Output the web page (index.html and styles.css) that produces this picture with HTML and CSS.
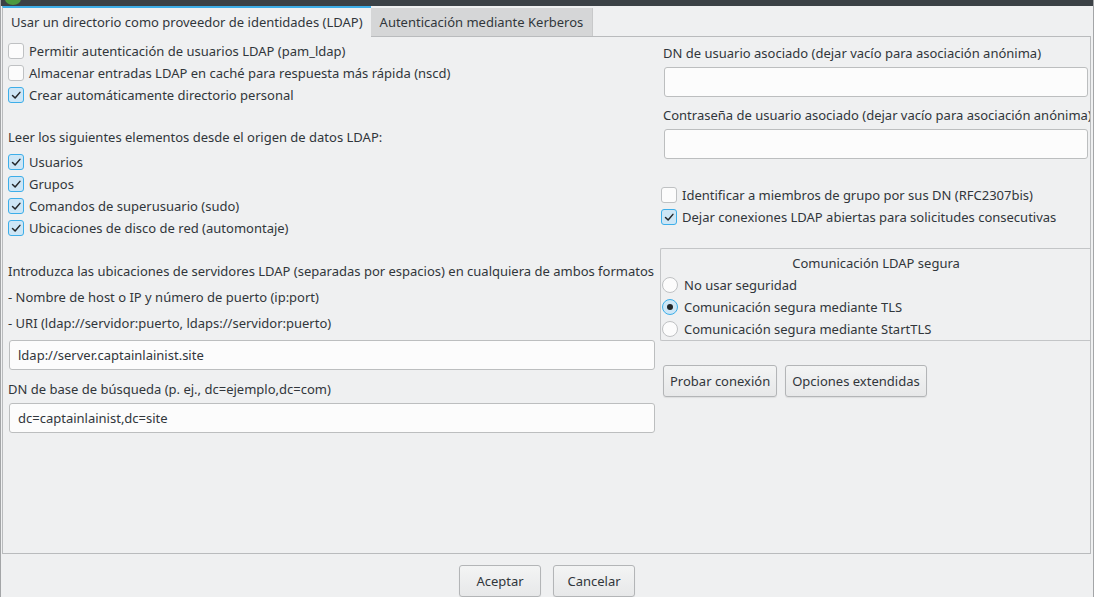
FILE: index.html
```html
<!DOCTYPE html>
<html lang="es">
<head>
<meta charset="utf-8">
<title>LDAP</title>
<link rel="stylesheet" href="styles.css">
</head>
<body>
<div class="window">
  <div class="titlebar"><span class="app-icon"></span></div>
  <div class="tabs">
    <div class="tab active">Usar un directorio como proveedor de identidades (LDAP)</div>
    <div class="tab">Autenticación mediante Kerberos</div>
  </div>
  <div class="panel">
    <div class="col col-left">
      <label class="check"><span class="box"></span>Permitir autenticación de usuarios LDAP (pam_ldap)</label>
      <label class="check"><span class="box"></span>Almacenar entradas LDAP en caché para respuesta más rápida (nscd)</label>
      <label class="check"><span class="box on"><svg viewBox="0 0 16 16"><polyline points="4,8.5 7,11.5 12.5,5" /></svg></span>Crear automáticamente directorio personal</label>

      <div class="text gap-20">Leer los siguientes elementos desde el origen de datos LDAP:</div>
      <div class="gap-3">
        <label class="check"><span class="box on"><svg viewBox="0 0 16 16"><polyline points="4,8.5 7,11.5 12.5,5" /></svg></span>Usuarios</label>
        <label class="check"><span class="box on"><svg viewBox="0 0 16 16"><polyline points="4,8.5 7,11.5 12.5,5" /></svg></span>Grupos</label>
        <label class="check"><span class="box on"><svg viewBox="0 0 16 16"><polyline points="4,8.5 7,11.5 12.5,5" /></svg></span>Comandos de superusuario (sudo)</label>
        <label class="check"><span class="box on"><svg viewBox="0 0 16 16"><polyline points="4,8.5 7,11.5 12.5,5" /></svg></span>Ubicaciones de disco de red (automontaje)</label>
      </div>

      <div class="text gap-21 nowrap">Introduzca las ubicaciones de servidores LDAP (separadas por espacios) en cualquiera de ambos formatos</div>
      <div class="text gap-4">- Nombre de host o IP y número de puerto (ip:port)</div>
      <div class="text gap-4">- URI (ldap://servidor:puerto, ldaps://servidor:puerto)</div>
      <div class="field gap-6">ldap://server.captainlainist.site</div>
      <div class="text gap-8">DN de base de búsqueda (p. ej., dc=ejemplo,dc=com)</div>
      <div class="field gap-3">dc=captainlainist,dc=site</div>
    </div>

    <div class="col col-right">
      <div class="text indent nowrap">DN de usuario asociado (dejar vacío para asociación anónima)</div>
      <div class="field wide gap-3"></div>
      <div class="text indent nowrap gap-7">Contraseña de usuario asociado (dejar vacío para asociación anónima)</div>
      <div class="field wide gap-3"></div>

      <div class="gap-25">
        <label class="check tight"><span class="box"></span>Identificar a miembros de grupo por sus DN (RFC2307bis)</label>
        <label class="check tight"><span class="box on"><svg viewBox="0 0 16 16"><polyline points="4,8.5 7,11.5 12.5,5" /></svg></span>Dejar conexiones LDAP abiertas para solicitudes consecutivas</label>
      </div>

      <div class="groupbox gap-20">
        <div class="group-title">Comunicación LDAP segura</div>
        <label class="radio"><span class="dot"></span>No usar seguridad</label>
        <label class="radio"><span class="dot on"></span>Comunicación segura mediante TLS</label>
        <label class="radio"><span class="dot"></span>Comunicación segura mediante StartTLS</label>
      </div>

      <div class="actions">
        <button class="btn">Probar conexión</button>
        <button class="btn">Opciones extendidas</button>
      </div>
    </div>
  </div>
  <div class="footer">
    <button class="btn dialog-btn">Aceptar</button>
    <button class="btn dialog-btn">Cancelar</button>
  </div>
</div>
</body>
</html>
```
FILE: styles.css
```css
* { box-sizing: border-box; }
html, body {
  margin: 0;
  padding: 0;
  width: 1094px;
  height: 597px;
  overflow: hidden;
  background: #eff0f1;
}
body {
  font-family: "Noto Sans", "DejaVu Sans", sans-serif;
  font-size: 13px;
  color: #31363b;
}
.window {
  width: 1094px;
  height: 597px;
  display: flex;
  flex-direction: column;
  border-left: 1px solid #a3a5a7;
  border-right: 1px solid #a3a5a7;
  background: #eff0f1;
}
.titlebar {
  height: 6px;
  background: #3b4146;
  flex: none;
  overflow: hidden;
  padding-left: 4px;
}
.app-icon {
  display: block;
  width: 16px;
  height: 12px;
  margin-top: -7px;
  border-radius: 50%;
  background: #4c9a3f;
}
.tabs {
  height: 30px;
  flex: none;
  display: flex;
  align-items: flex-end;
  padding-left: 1px;
  background: #eff0f1;
}
.tab {
  height: 28px;
  padding: 0 9px 0 9px;
  display: flex;
  align-items: center;
  background: #d5d6d7;
  white-space: nowrap;
  border-right: 1px solid #c8c9ca;
}
.tab.active {
  height: 31px;
  margin-bottom: -1px;
  position: relative;
  z-index: 1;
  background: #eff0f1;
  border-top: 2px solid #3daee9;
  border-left: 1px solid #b9bbbd;
  border-right: none;
  padding: 0 8px 1px 8px;
}
.panel {
  flex: none;
  height: 518px;
  margin: 0 2px 0 1px;
  border: 1px solid #b9bbbd;
  background: #eff0f1;
  display: flex;
  gap: 5px;
  padding-left: 5px;
}
.col { display: flex; flex-direction: column; }
.col-left { width: 647px; padding-top: 3px; }
.col-right { flex: 1; min-width: 0; padding-top: 5px; overflow: hidden; }

.text { height: 22px; line-height: 22px; white-space: nowrap; }
.nowrap { white-space: nowrap; }
.indent { padding-left: 3px; }

.gap-3 { margin-top: 3px; }
.gap-4 { margin-top: 4px; }
.gap-6 { margin-top: 6px; }
.gap-7 { margin-top: 7px; }
.gap-8 { margin-top: 8px; }
.gap-20 { margin-top: 20px; }
.gap-21 { margin-top: 21px; }
.gap-25 { margin-top: 25px; }

.check {
  height: 22px;
  display: flex;
  align-items: center;
  gap: 5px;
  white-space: nowrap;
}
.check.tight { padding-left: 1px; }
.box {
  width: 16px;
  height: 16px;
  flex: none;
  border: 1px solid #bfc1c3;
  border-radius: 3px;
  background: #fcfcfc;
  display: flex;
}
.box.on {
  border-color: #3daee9;
  background: #cde6f6;
}
.box svg { width: 14px; height: 14px; }
.box polyline {
  fill: none;
  stroke: #232629;
  stroke-width: 1.7;
  stroke-linecap: round;
  stroke-linejoin: round;
}

.field {
  height: 30px;
  margin-left: 1px;
  border: 1px solid #bcbebf;
  border-radius: 3px;
  background: #fcfcfc;
  padding: 0 8px;
  display: flex;
  align-items: center;
}
.field.wide { margin-left: 4px; margin-right: 2px; }

.groupbox {
  border: 1px solid #c3c5c7;
  border-right: none;
  border-radius: 2px 0 0 2px;
  padding: 3px 0 0 1px;
  display: flex;
  flex-direction: column;
}
.group-title {
  height: 22px;
  line-height: 22px;
  text-align: center;
}
.radio {
  height: 22px;
  display: flex;
  align-items: center;
  gap: 6px;
  white-space: nowrap;
}
.dot {
  width: 16px;
  height: 16px;
  flex: none;
  border: 1px solid #bfc1c3;
  border-radius: 50%;
  background: #fcfcfc;
  display: flex;
  align-items: center;
  justify-content: center;
}
.dot.on {
  border-color: #3daee9;
  background: #cde6f6;
}
.dot.on::after {
  content: "";
  width: 6px;
  height: 6px;
  border-radius: 50%;
  background: #232629;
}

.actions {
  display: flex;
  gap: 8px;
  margin-top: 24px;
  padding-left: 3px;
}
.btn {
  height: 32px;
  padding: 0 6px;
  font-family: inherit;
  font-size: 13px;
  color: #31363b;
  border: 1px solid #b3b5b7;
  border-radius: 3px;
  background: linear-gradient(#f3f4f4, #e7e8e9);
  box-shadow: 0 1px 1px rgba(0,0,0,0.08);
  white-space: nowrap;
}
.footer {
  flex: 1;
  display: flex;
  justify-content: center;
  gap: 12px;
  padding-top: 11px;
}
.dialog-btn { width: 82px; padding: 0; }
```
